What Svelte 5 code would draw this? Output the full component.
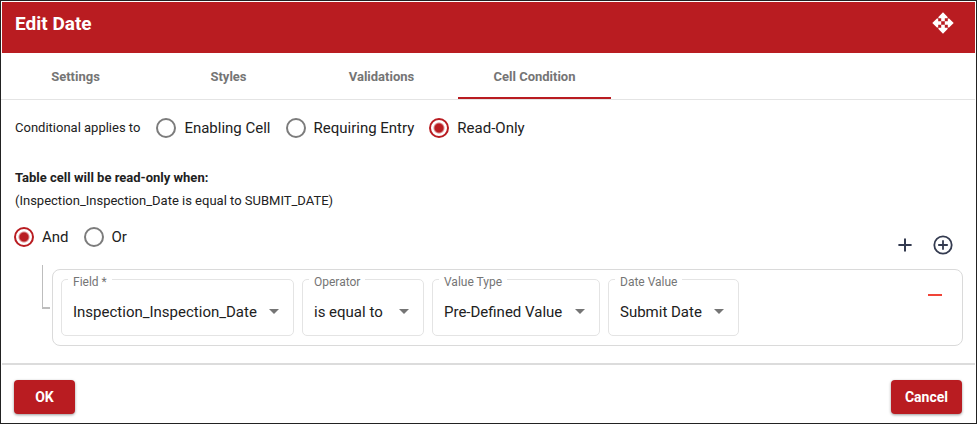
<script>
  const tabs = ['Settings', 'Styles', 'Validations', 'Cell Condition'];
  let activeTab = $state('Cell Condition');

  const modes = ['Enabling Cell', 'Requiring Entry', 'Read-Only'];
  let mode = $state('Read-Only');

  const joins = ['And', 'Or'];
  let join = $state('And');

  const fields = [
    { id: 'field', label: 'Field *', value: 'Inspection_Inspection_Date' },
    { id: 'operator', label: 'Operator', value: 'is equal to' },
    { id: 'value-type', label: 'Value Type', value: 'Pre-Defined Value' },
    { id: 'date-value', label: 'Date Value', value: 'Submit Date' }
  ];
</script>

<div class="dialog">
  <header>
    <h1>Edit Date</h1>
    <button class="icon move" aria-label="Move dialog">
      <svg width="22" height="22" viewBox="0 0 22 22" fill="#fff">
        <path d="M11 0.3 15.6 4.9v1.3h-2.8v3H9.2v-3H6.4V4.9z" />
        <path d="M11 21.7 15.6 17.1v-1.3h-2.8v-3H9.2v3H6.4v1.3z" />
        <path d="M0.3 11 4.9 6.4h1.3v2.8h3v3.6h-3v2.8H4.9z" />
        <path d="M21.7 11 17.1 6.4h-1.3v2.8h-3v3.6h3v2.8h1.3z" />
      </svg>
    </button>
  </header>

  <div class="tabs" role="tablist">
    {#each tabs as tab}
      <button
        class="tab"
        class:active={tab === activeTab}
        role="tab"
        aria-selected={tab === activeTab}
        onclick={() => (activeTab = tab)}>{tab}</button>
    {/each}
  </div>

  <main>
    <div class="row" role="radiogroup" aria-labelledby="applies">
      <span id="applies">Conditional applies to</span>
      {#each modes as item}
        <label class="radio"><input type="radio" name="mode" value={item} bind:group={mode} />{item}</label>
      {/each}
    </div>

    <div class="summary">
      <strong>Table cell will be read-only when:</strong>
      <span>(Inspection_Inspection_Date is equal to SUBMIT_DATE)</span>
    </div>

    <div class="group-bar">
      <div class="row" role="radiogroup" aria-label="Join conditions with">
        {#each joins as item}
          <label class="radio"><input type="radio" name="join" value={item} bind:group={join} />{item}</label>
        {/each}
      </div>
      <div class="actions">
        <button class="icon" aria-label="Add condition">
          <svg width="20" height="20" viewBox="0 0 20 20" fill="none" stroke="#343b50" stroke-width="2">
            <path d="M10 3.4v13.2M3.4 10h13.2" />
          </svg>
        </button>
        <button class="icon" aria-label="Add group">
          <svg width="20" height="20" viewBox="0 0 20 20" fill="none" stroke="#343b50" stroke-width="1.8">
            <circle cx="10" cy="10" r="8.7" />
            <path d="M10 5.2v9.6M5.2 10h9.6" />
          </svg>
        </button>
      </div>
    </div>

    <div class="tree">
      <div class="branch"></div>
      <div class="condition">
        {#each fields as f}
          <div class="field {f.id}">
            <label for={f.id}>{f.label}</label>
            <select id={f.id}><option>{f.value}</option></select>
            <svg class="arrow" width="10" height="5" viewBox="0 0 10 5"><path d="M0 0h10L5 5z" fill="#757575" /></svg>
          </div>
        {/each}
        <button class="icon remove" aria-label="Remove condition">
          <svg width="20" height="20" viewBox="0 0 20 20"><path d="M3 10h14" stroke="#f04438" stroke-width="2" /></svg>
        </button>
      </div>
    </div>
  </main>

  <footer>
    <button class="primary">OK</button>
    <button class="primary">Cancel</button>
  </footer>
</div>

<style>
  .dialog {
    box-sizing: border-box;
    border: 1px solid #222;
    padding: 1px;
    overflow: hidden;
    background: #fff;
    color: #212121;
    font: 13px/20px Roboto, sans-serif;
  }

  button {
    font: inherit;
    border: 0;
    padding: 0;
    background: none;
    cursor: pointer;
  }

  .icon {
    display: flex;
  }

  header {
    display: flex;
    justify-content: space-between;
    align-items: flex-start;
    height: 51px;
    box-sizing: border-box;
    padding: 10px 21px 0 13px;
    background: #b91c21;
    color: #fff;
  }

  h1 {
    margin: 0;
    font-size: 19px;
    line-height: 24px;
    font-weight: 700;
  }

  .tabs {
    display: flex;
    margin-left: -3px;
    border-bottom: 1px solid #e4e4e4;
  }

  .tab {
    flex: 0 1 153px;
    height: 46px;
    padding-top: 1px;
    color: #757575;
    font-weight: 700;
    border-top: 2px solid transparent;
    border-bottom: 2px solid transparent;
  }

  .tab.active {
    border-bottom-color: #b91c21;
  }

  main {
    padding: 18px 12px 17px;
  }

  .row {
    display: flex;
    align-items: center;
    gap: 15px;
  }

  .radio {
    display: flex;
    align-items: center;
    gap: 8px;
    font-size: 15px;
  }

  input {
    appearance: none;
    box-sizing: border-box;
    width: 20px;
    height: 20px;
    margin: 0;
    border: 2px solid #7c7c7c;
    border-radius: 50%;
  }

  input:checked {
    border-color: #b91c21;
    background: radial-gradient(circle, #b91c21 4px, #fff 6px);
  }

  .summary {
    display: flex;
    flex-direction: column;
    gap: 3px;
    padding: 30px 0 16px 1px;
  }

  #applies {
    padding: 0 1px;
  }

  .group-bar {
    display: flex;
    justify-content: space-between;
    align-items: flex-start;
  }

  .actions {
    display: flex;
    gap: 18px;
    padding: 8px 10px 0 0;
  }

  .tree {
    display: flex;
    padding: 10px 0 0 28px;
  }

  .branch {
    width: 8px;
    height: 44px;
    box-sizing: border-box;
    border: solid #bdbdbd;
    border-width: 0 0 2px 1px;
    margin-right: 2px;
  }

  .condition {
    flex: 1;
    display: flex;
    gap: 8px;
    margin-top: 4px;
    padding: 9px 17px 9px 8px;
    border: 1px solid #dadada;
    border-radius: 8px;
  }

  .field {
    position: relative;
    border: 1px solid #e4e4e4;
    border-radius: 5px;
  }

  .operator {
    min-width: 120px;
  }

  .field label {
    position: absolute;
    top: -6px;
    left: 6px;
    padding: 0 5px;
    background: #fff;
    color: #757575;
    font-size: 12px;
    line-height: 16px;
  }

  select {
    appearance: none;
    width: 100%;
    height: 55px;
    padding: 9px 36px 0 11px;
    border: 0;
    background: none;
    color: inherit;
    font: 15px/20px Roboto, sans-serif;
  }

  .arrow {
    position: absolute;
    right: 14px;
    top: 29px;
    pointer-events: none;
  }

  .remove {
    margin: 6px 0 0 auto;
    align-self: flex-start;
  }

  footer {
    display: flex;
    justify-content: space-between;
    padding: 15px 13px 8px 12px;
    border-top: 2px solid #dcdcdc;
  }

  .primary {
    height: 34px;
    padding: 0 14px;
    min-width: 61px;
    border-radius: 4px;
    background: #b91c21;
    color: #fff;
    font-size: 14px;
    font-weight: 700;
    box-shadow: 0 1px 3px #0006;
  }
</style>
